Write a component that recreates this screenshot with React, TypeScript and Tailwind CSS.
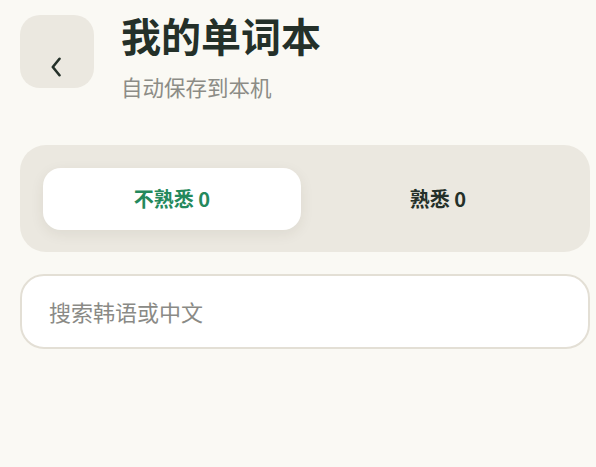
import { FC } from 'react'

const BackIcon: FC = () => {
  return (
    <svg width="10" height="20" viewBox="0 0 10 20" fill="none" xmlns="http://www.w3.org/2000/svg">
      <polyline
        points="8.5,1.8 1.8,10 8.5,18.2"
        stroke="#243029"
        strokeWidth="2.6"
        strokeLinecap="round"
        strokeLinejoin="round"
      />
    </svg>
  )
}

const App: FC = () => {
  return (
    <div
      className="min-h-screen bg-[#faf9f4] pl-5 pr-[6px] pt-[15px]"
      style={{ fontFamily: '"Noto Sans CJK SC", "Noto Sans", sans-serif' }}
    >
      <div className="flex h-[73px] items-start gap-[27px]">
        <button className="flex h-[73px] w-[74px] shrink-0 justify-center rounded-[20px] bg-[#ebe8e0] pr-[2px] pt-[42px]">
          <BackIcon />
        </button>
        <div className="flex flex-col">
          <h1 className="text-[40px] font-bold leading-[40px] text-[#243029]">我的单词本</h1>
          <p className="mt-[21px] text-[21.5px] leading-none text-[#8c8c86]">自动保存到本机</p>
        </div>
      </div>

      <div className="mt-[57px] grid grid-cols-2 gap-2 rounded-[26px] bg-[#ebe8e0] px-[23px] pb-[22px] pt-[23px]">
        <button className="flex h-[62px] items-center justify-center rounded-[18px] bg-white text-[20px] font-bold text-[#24895c] shadow-[0_4px_14px_rgba(60,50,30,0.08)]">
          不熟悉 0
        </button>
        <button className="flex h-[62px] items-center justify-center rounded-[18px] text-[20px] font-bold text-[#243029]">
          熟悉 0
        </button>
      </div>

      <div className="mt-[22px] flex h-[75px] items-center rounded-[24px] border-2 border-[#e3dfd5] bg-white pl-[27px]">
        <input
          className="w-full bg-transparent text-[22px] text-[#243029] outline-none placeholder:text-[#8a8a86]"
          placeholder="搜索韩语或中文"
        />
      </div>
    </div>
  )
}

export default App
